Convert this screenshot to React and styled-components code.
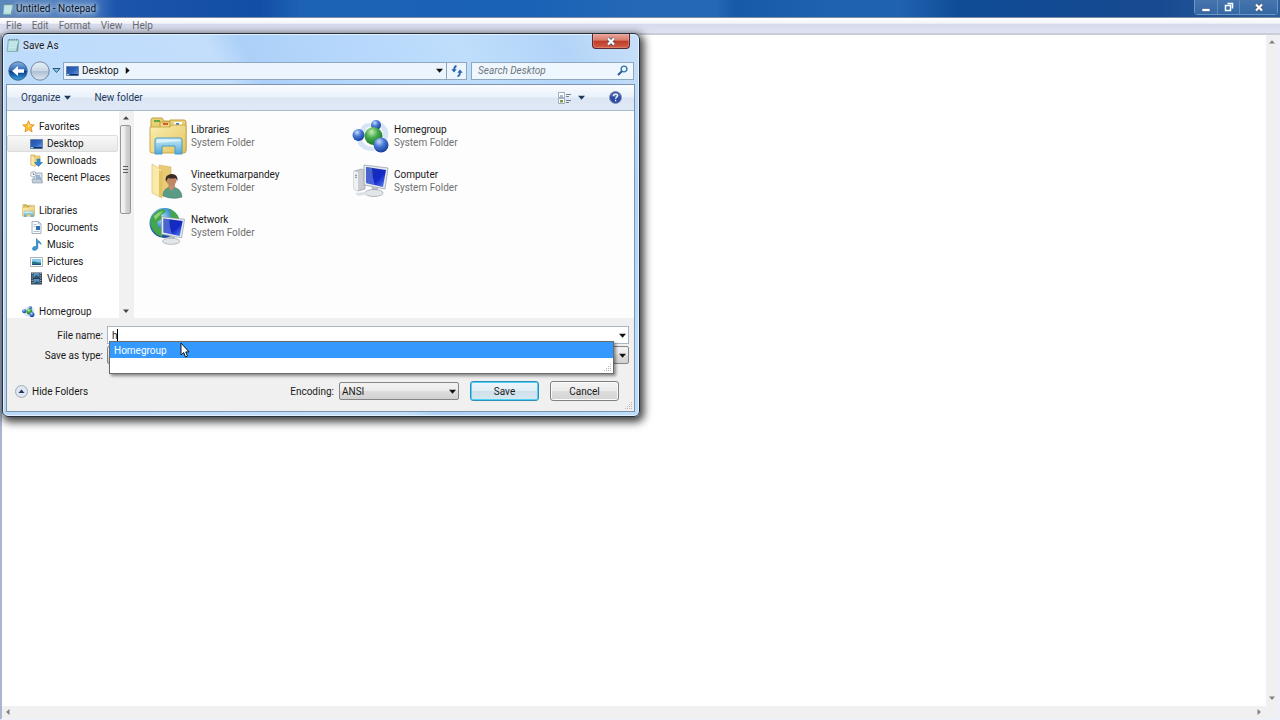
import React, { useState } from 'react';
import styled, { createGlobalStyle } from 'styled-components';

const GlobalStyle = createGlobalStyle`
  * {
    box-sizing: border-box;
  }

  body {
    margin: 0;
    font-family: Roboto, "Open Sans", sans-serif;
    font-size: 10px;
    line-height: 13px;
    color: #1a1a1a;
  }

  button, input, select, textarea {
    font: inherit;
    color: inherit;
    margin: 0;
    border-radius: 0;
  }

  svg {
    display: block;
    flex: none;
  }
`;

const Window = styled.main`
  position: relative;
  display: flex;
  flex-direction: column;
  height: 100vh;
  overflow: hidden;
  background: #ffffff;
`;

const TitleBar = styled.header`
  display: flex;
  align-items: center;
  height: 17px;
  padding-left: 2px;
  background: linear-gradient(90deg, #5c87bd 0, #4a7dc0 90px, #1c55ab 115px, #124ea5 260px, #1d62b5 300px, #1a62b6 530px, #2469b6 640px, #2469b6 715px, #165aa8 735px, #1f62b0 830px, #1f62b0 900px, #0f4b96 960px, #174a90 1160px, #2d609d 100%);
`;

const WindowTitle = styled.h1`
  margin: 0;
  padding: 0 2px;
  flex: 1;
  font-size: 10px;
  font-weight: 400;
  color: #0b1626;
  text-shadow: 0 0 4px #ffffffbb, 0 0 7px #ffffffaa, 0 0 9px #ffffff88;
`;

const WindowButtons = styled.div`
  display: flex;
  align-self: stretch;
  height: 15px;
  margin-right: 2px;
  border: 1px solid #7095c2;
  border-top: 0;
  border-radius: 0 0 4px 4px;
`;

const WindowButton = styled.button`
  display: flex;
  align-items: center;
  justify-content: center;
  width: ${(p) => (p.$wide ? '38px' : '22px')};
  padding: 0;
  border: 0;
  border-left: ${(p) => (p.$first ? '0' : '1px solid #6288b7')};
  background: linear-gradient(#4775ad, #3468a5);
`;

const MenuBar = styled.nav`
  display: flex;
  align-items: center;
  gap: 10px;
  height: 18px;
  padding: 0 6px;
  border-top: 1px solid #7d8ba3;
  border-bottom: 2px solid #cbccd8;
  background: linear-gradient(#ffffff 0, #f3f4fa 35%, #d6dcee 42%, #dfe3f3 100%);
`;

const MenuItem = styled.button`
  padding: 0;
  border: 0;
  background: none;
  color: #6d6d70;
`;

const Editor = styled.div`
  flex: 1;
  display: grid;
  grid-template-columns: 1fr 12px;
  grid-template-rows: 1fr 12px;
  border-left: 2px solid #a8b6cf;
  border-right: 2px solid #eef1fa;
  border-bottom: 2px solid #eef1fa;
  min-height: 0;
`;

const TextArea = styled.textarea`
  padding: 4px;
  border: 0;
  outline: 0;
  resize: none;
  background: #ffffff;
`;

const ScrollTrack = styled.div`
  display: flex;
  flex-direction: ${(p) => (p.$horizontal ? 'row' : 'column')};
  align-items: center;
  justify-content: space-between;
  padding: ${(p) => (p.$horizontal ? '0 4px 0 3px' : '4px 0 5px')};
  background: #f0f0f1;
`;

const Corner = styled.div`
  background: #f0f0f1;
`;

const Dialog = styled.section`
  position: absolute;
  left: 2px;
  top: 33px;
  width: 638px;
  max-width: 100%;
  padding: 0 4px 4px 3px;
  border: 1px solid #24303e;
  border-radius: 6px;
  background: linear-gradient(62deg, #b9d7f7 0, #bedcfc 30%, #c3defb 48%, #acd0f8 52%, #b4d6fb 62%, #bfdefc 78%, #b2d4f8 90%, #c9e0f8 100%);
  box-shadow: inset 0 0 0 1px #e3f1fd, 2px 3px 9px 2px #000000c0;
`;

const DialogTitle = styled.div`
  display: flex;
  align-items: flex-start;
  justify-content: space-between;
  height: 25px;
  padding-right: 5px;
`;

const DialogName = styled.h2`
  display: flex;
  align-items: center;
  gap: 3px;
  margin: 4px 0 0;
  font-size: 10px;
  font-weight: 400;
  text-shadow: 0 0 6px #ffffff;
`;

const CloseButton = styled.button`
  display: flex;
  align-items: center;
  justify-content: center;
  width: 38px;
  height: 15px;
  padding: 0;
  border: 1px solid #5a2a30;
  border-top: 0;
  border-radius: 0 0 4px 4px;
  background: linear-gradient(#e9a79c 0, #d77a6b 45%, #bf3a26 50%, #d0604a 100%);
  box-shadow: inset 0 0 0 1px #f0b6a955;
`;

const AddressRow = styled.div`
  display: flex;
  align-items: center;
  height: 23px;
  margin-bottom: 2px;
  padding-right: 1px;
`;

const PlainButton = styled.button`
  display: flex;
  align-items: center;
  gap: 4px;
  padding: 0;
  border: 0;
  background: none;
`;

const NavButtons = styled.div`
  display: flex;
  align-items: center;
  gap: 2px;
  padding: 0 2px;
`;

const AddressBar = styled.div`
  flex: 1;
  display: flex;
  align-items: center;
  gap: 3px;
  height: 18px;
  padding-left: 2px;
  border: 1px solid #8fa6bf;
  background: #ecf5fe;
`;

const CrumbArrow = styled(PlainButton)`
  margin: 0 auto 0 2px;
`;

const RefreshButton = styled(PlainButton)`
  justify-content: center;
  width: 20px;
  height: 16px;
  border-left: 1px solid #8fa6bf;
`;

const SearchBox = styled.label`
  display: flex;
  align-items: center;
  width: 163px;
  height: 18px;
  margin-left: 4px;
  padding: 0 5px 0 6px;
  border: 1px solid #8fa6bf;
  background: #eef6fe;

  input {
    flex: 1;
    min-width: 0;
    padding: 0;
    border: 0;
    outline: 0;
    background: none;
    font-style: italic;
  }

  input::placeholder {
    color: #6f7780;
    opacity: 1;
  }
`;

const DialogBody = styled.div`
  border: 1px solid #7c93ab;
  background: #f0f0f0;
`;

const Toolbar = styled.div`
  display: flex;
  align-items: center;
  height: 26px;
  padding: 0 12px 0 14px;
  border-bottom: 1px solid #aabccf;
  background: linear-gradient(#fafcfe 0, #eaf1fa 48%, #dce6f4 52%, #dfe9f6 100%);
  color: #1e395b;
`;

const ToolButton = styled(PlainButton)`
  margin-right: 23px;
`;

const ToolIcons = styled.div`
  display: flex;
  align-items: center;
  gap: 24px;
  margin-left: auto;

  button {
    gap: 7px;
  }
`;

const Explorer = styled.div`
  display: flex;
  height: 207px;
`;

const Sidebar = styled.nav`
  width: 112px;
  padding: 7px 0 0;
  overflow: hidden;
  background: #ffffff;
`;

const TreeList = styled.ul`
  margin: 0 0 16px;
  padding: 0;
  list-style: none;
`;

const TreeItem = styled.li`
  height: 17px;
`;

const TreeButton = styled.button`
  display: flex;
  align-items: center;
  gap: 4px;
  width: 111px;
  height: 17px;
  padding: 0 0 0 ${(p) => (p.$child ? '22px' : '14px')};
  border: 1px solid ${(p) => (p.$selected ? '#dcdcdc' : 'transparent')};
  border-radius: 2px;
  background: ${(p) => (p.$selected ? 'linear-gradient(#f9f9f9, #e8e8e8)' : 'none')};
  white-space: nowrap;
`;

const SideScroll = styled.div`
  display: flex;
  flex-direction: column;
  align-items: center;
  width: 13px;
  padding: 4px 0;
  background: #f1f1f1;
`;

const Thumb = styled.div`
  display: flex;
  align-items: center;
  justify-content: center;
  width: 11px;
  height: 89px;
  margin: 4px 0 auto;
  border: 1px solid #979797;
  border-radius: 2px;
  background: linear-gradient(90deg, #f6f6f6 0, #e8e8e9 45%, #d3d3d6 55%, #c6c6ca 100%);
`;

const FileArea = styled.div`
  flex: 1;
  margin-left: 2px;
  padding: 2px 0 0 15px;
  background: #fdfdfd;
`;

const FileGrid = styled.div`
  display: grid;
  grid-template-columns: 203px 203px;
  grid-auto-rows: 45px;
`;

const Tile = styled.button`
  display: flex;
  align-items: center;
  gap: 4px;
  padding: 0;
  border: 0;
  background: none;
  text-align: left;
`;

const TileName = styled.span`
  display: block;
`;

const TileType = styled.span`
  display: block;
  color: #707070;
`;

const Form = styled.form`
  padding: 8px 5px 10px 0;
`;

const Field = styled.div`
  display: grid;
  grid-template-columns: 96px 1fr;
  align-items: center;
  column-gap: 4px;
  margin-bottom: 2px;

  > label {
    text-align: right;
  }
`;

const Combo = styled.div`
  position: relative;
  display: flex;
  height: 18px;
  border: 1px solid #a8b6c4;
  background: #ffffff;

  input {
    flex: 1;
    min-width: 0;
    padding: 0 4px;
    border: 0;
    outline: 0;
    background: none;
    caret-color: transparent;
  }
`;

const ComboButton = styled(PlainButton)`
  justify-content: center;
  width: 12px;
`;

const Caret = styled.span`
  position: absolute;
  left: 9px;
  top: 2px;
  width: 1px;
  height: 12px;
  background: #000000;
`;

const Suggestions = styled.ul`
  position: absolute;
  z-index: 1;
  left: 1px;
  right: 14px;
  top: 14px;
  height: 33px;
  margin: 0;
  padding: 0;
  list-style: none;
  border: 1px solid #6b6b6b;
  background: #ffffff;
  box-shadow: 2px 2px 3px #00000070;
`;

const Suggestion = styled.li`
  height: 16px;
  padding: 2px 4px 1px;
  background: #3399ff;
  color: #ffffff;
`;

const PopupGrip = styled.span`
  position: absolute;
  right: 1px;
  bottom: 1px;
`;

const SelectBox = styled.div`
  position: relative;
  display: flex;
  align-items: center;
  width: ${(p) => p.$width};

  select {
    width: 100%;
    height: 18px;
    padding: 0 2px;
    appearance: none;
    border: 1px solid #858585;
    border-radius: 2px;
    background: linear-gradient(#f3f3f3 0, #ebebeb 48%, #dddddd 52%, #d1d1d1 100%);
  }

  svg {
    position: absolute;
    right: 3px;
    pointer-events: none;
  }
`;

const Footer = styled.div`
  display: flex;
  align-items: center;
  padding: 15px 10px 0 8px;
`;

const EncodingField = styled.div`
  display: flex;
  align-items: center;
  gap: 5px;
  margin-left: auto;
`;

const PushButton = styled.button`
  width: 69px;
  height: 20px;
  margin-left: 11px;
  padding: 0;
  border: 1px solid ${(p) => (p.$primary ? '#2f8fb8' : '#808080')};
  border-radius: 3px;
  background: ${(p) => (p.$primary
    ? 'linear-gradient(#eef5f9 0, #e2eef5 48%, #cfe0ea 52%, #d6e8f2 100%)'
    : 'linear-gradient(#f3f3f3 0, #ebebeb 48%, #dddddd 52%, #d3d3d3 100%)')};
  box-shadow: inset 0 0 0 1px ${(p) => (p.$primary ? '#4fd0f5' : '#fbfbfb')};
`;

const DialogGrip = styled.span`
  position: absolute;
  right: 6px;
  bottom: 6px;
`;

const Pointer = styled.span`
  position: absolute;
  z-index: 2;
  left: 180px;
  top: 342px;
`;

const Arrow = ({ color = '#111111', size = 7, turn = 0 }) => (
  <svg width={size} height={size} viewBox="0 0 8 8" transform={`rotate(${turn})`}>
    <path d="M0 2h8L4 6.5z" fill={color} />
  </svg>
);

const Grip = () => (
  <svg width="9" height="9" viewBox="0 0 9 9" fill="#b9b9b9">
    <path d="M7 1h1v1H7zM5 3h1v1H5zM7 3h1v1H7zM3 5h1v1H3zM5 5h1v1H5zM7 5h1v1H7zM1 7h1v1H1zM3 7h1v1H3zM5 7h1v1H5zM7 7h1v1H7z" />
  </svg>
);

const CrossIcon = () => (
  <svg width="10" height="9" viewBox="0 0 10 9">
    <path d="M2 1.5 8 7.5M8 1.5 2 7.5" stroke="#4a5365" strokeWidth="3.6" />
    <path d="M2 1.5 8 7.5M8 1.5 2 7.5" stroke="#ffffff" strokeWidth="2.2" />
  </svg>
);

const NotepadIcon = ({ size = 12 }) => (
  <svg width={size} height={size} viewBox="0 0 12 12">
    <path d="M2 1.5h9l-1 10H1z" fill="#b7dfe2" stroke="#6b9a9f" strokeWidth=".6" />
    <path d="M3 4h6.5M2.8 6h6.5M2.6 8h6.4" stroke="#d4f0f0" strokeWidth=".7" />
    <path d="m10.8 2-.9 9.4-1.1-1z" fill="#6d8c8f" />
    <path d="M3 .8v1.4M5 .8v1.4M7 .8v1.4M9 .8v1.4" stroke="#657a80" strokeWidth=".7" />
  </svg>
);

const BackIcon = () => (
  <svg width="20" height="20" viewBox="0 0 20 20">
    <defs>
      <linearGradient id="back" x2="0" y2="1">
        <stop stopColor="#8ab4e3" />
        <stop offset=".48" stopColor="#2b63b1" />
        <stop offset=".52" stopColor="#0b398c" />
        <stop offset="1" stopColor="#34a8e8" />
      </linearGradient>
    </defs>
    <circle cx="10" cy="10" r="9.2" fill="url(#back)" stroke="#435f85" />
    <path d="m4 10 6-5v3.3h6v3.4h-6V15z" fill="#ffffff" />
  </svg>
);

const ForwardIcon = () => (
  <svg width="20" height="20" viewBox="0 0 20 20">
    <defs>
      <linearGradient id="fwd" x2="0" y2="1">
        <stop stopColor="#e9f1f8" />
        <stop offset=".5" stopColor="#c9d6e3" />
        <stop offset=".53" stopColor="#adc0d2" />
        <stop offset="1" stopColor="#dce9f5" />
      </linearGradient>
    </defs>
    <circle cx="10" cy="10" r="9.2" fill="url(#fwd)" stroke="#74869b" />
  </svg>
);

const DesktopIcon = () => (
  <svg width="13" height="12" viewBox="0 0 13 12">
    <defs>
      <linearGradient id="desk" x2="1" y2="1">
        <stop stopColor="#2450a4" />
        <stop offset=".5" stopColor="#2f62bd" />
        <stop offset="1" stopColor="#6ba2e8" />
      </linearGradient>
    </defs>
    <path d="M.5 1.5h12v9H.5z" fill="url(#desk)" stroke="#5d7ba6" strokeWidth=".8" />
    <path d="M1 9h11v1.4H1z" fill="#16305f" />
    <path d="M1 9h2.4v1.4H1z" fill="#8fd6e8" />
  </svg>
);

const RefreshIcon = () => (
  <svg width="12" height="12" viewBox="0 0 12 12" fill="none" stroke="#2c63b4" strokeWidth="1.8">
    <path d="M5.5 1C3 1.5 3 3.5 3 6" />
    <path d="M.3 4.2 3 7.4l2.7-3.2z" fill="#2c63b4" stroke="none" />
    <path d="M6.5 11.2C9 10.7 9 8.7 9 6.7" />
    <path d="M6.3 7.8 9 4.6l2.7 3.2z" fill="#2c63b4" stroke="none" />
  </svg>
);

const SearchIcon = () => (
  <svg width="11" height="11" viewBox="0 0 11 11">
    <circle cx="7" cy="4" r="2.9" fill="#eaf6ff" stroke="#3175ae" strokeWidth="1.4" />
    <path d="M4.9 6.2 1 10" stroke="#285a94" strokeWidth="1.9" />
  </svg>
);

const ViewIcon = () => (
  <svg width="13" height="12" viewBox="0 0 13 12">
    <path d="M.5.5h6v5h-6zM.5 6.5h6v5h-6z" fill="#ffffff" stroke="#8e9aa8" strokeWidth=".8" />
    <path d="M1.5 4.5 3 3l1 1 1-1v1.5z" fill="#3c78a8" />
    <path d="M2 8h3v2.5H2z" fill="#7a9a42" />
    <path d="M8 2.5h5M8 4.5h3M8 8.5h5M8 10.5h3" stroke="#74808f" />
  </svg>
);

const HelpIcon = () => (
  <svg width="13" height="13" viewBox="0 0 13 13">
    <circle cx="6.5" cy="6.5" r="6" fill="#2c4ba6" stroke="#8896b4" />
    <path d="M2 5a4.7 4.7 0 0 1 9 0c-3 1.5-6 1.5-9 0z" fill="#7b93d6" opacity=".6" />
    <path d="M4.6 5c0-2.6 4-2.5 3.9-.2 0 1.4-1.9 1.4-1.9 3M6.6 8.8v1.4" fill="none" stroke="#ffffff" strokeWidth="1.3" />
  </svg>
);

const StarIcon = () => (
  <svg width="13" height="13" viewBox="0 0 13 13">
    <path d="m6.5.8 1.6 3.9 4.2.3-3.2 2.7 1 4.2-3.6-2.3-3.6 2.3 1-4.2L.7 5l4.2-.3z" fill="#ffc233" stroke="#e0851c" strokeWidth=".8" />
    <path d="m6.5 2.5 1 3H10L6 7z" fill="#ffe58a" />
  </svg>
);

const DownloadsIcon = () => (
  <svg width="13" height="13" viewBox="0 0 13 13">
    <path d="M1 1h4l1 1h4v9H1z" fill="#f2d57c" stroke="#c9a349" strokeWidth=".6" />
    <path d="m1 1 4 2v9.5L1 11z" fill="#fbe9a8" stroke="#c9a349" strokeWidth=".5" />
    <path d="M7 5h3v3.5h2.5l-4 4-4-4H7z" fill="#2f8fd4" stroke="#1c6ba8" strokeWidth=".5" />
  </svg>
);

const RecentIcon = () => (
  <svg width="13" height="13" viewBox="0 0 13 13">
    <path d="M4 2h8v9H4z" fill="#dfe7ef" stroke="#8595a8" strokeWidth=".7" />
    <path d="M6 5h4M6 7h5" stroke="#4d85ba" />
    <path d="M2 8h9l1.5 4h-10z" fill="#c3ceda" stroke="#8595a8" strokeWidth=".6" />
    <circle cx="3.3" cy="3.3" r="2.7" fill="#f7fafc" stroke="#91a0b0" strokeWidth=".8" />
    <path d="M3.3 1.7v1.8h1.3" fill="none" stroke="#4c5f78" strokeWidth=".7" />
  </svg>
);

const LibraryIcon = ({ size = 13 }) => (
  <svg width={size} height={size} viewBox="0 0 38 38">
    <defs>
      <linearGradient id="folder" x2="1" y2="1">
        <stop stopColor="#fbf0b4" />
        <stop offset="1" stopColor="#e5c25c" />
      </linearGradient>
      <linearGradient id="stand" x2="0" y2="1">
        <stop stopColor="#c8ecf9" />
        <stop offset="1" stopColor="#52a9d8" />
      </linearGradient>
    </defs>
    <path d="M2 3q0-2 2-2h9l2 3h8v30H2z" fill="#e9d070" stroke="#bf9f45" />
    <path d="M11 5h10l2 3h9v26H11z" fill="#efd97f" stroke="#bf9f45" />
    <path d="M21 3h14q2 0 2 2v29H21z" fill="#ead079" stroke="#bf9f45" />
    <path d="M5 3h6v2H5z" fill="#65a745" />
    <path d="M14 6h5v2h-5z" fill="#d4583a" />
    <path d="M25 5h8v3h-8z" fill="#ffffff" />
    <path d="M27 6h3v2h-3z" fill="#3a80c4" />
    <path d="M1 10h20l2-2h14v26q0 2-2 2H3q-2 0-2-2z" fill="url(#folder)" stroke="#c9a94f" />
    <path d="M6 23q0-2 2-2h23q2 0 2 2v14h-7v-8H13v8H6z" fill="url(#stand)" stroke="#4b9cc8" />
    <path d="M7.5 24q0-1.5 1.5-1.5h21q1.5 0 1.5 1.5l-24 2z" fill="#ecfaff" opacity=".7" />
  </svg>
);

const DocumentIcon = () => (
  <svg width="13" height="13" viewBox="0 0 13 13">
    <path d="M2 .5h6.5L11 3v9.5H2z" fill="#f8fbfd" stroke="#8fa0b2" strokeWidth=".8" />
    <path d="M8.500.5V3H11M3.5 3.5h3M3.5 5.5h2M3.5 10.5h6" fill="none" stroke="#91a9c1" strokeWidth=".7" />
    <path d="M6 5h4v4H6z" fill="#336fb0" />
  </svg>
);

const MusicIcon = () => (
  <svg width="13" height="13" viewBox="0 0 13 13">
    <path d="M6.5.5c.5 2.5 4.5 2.5 4.5 6-1-1.5-2-2-3.2-2v5c0 3-5.3 4-5.3 1.2 0-1.7 2.2-2.7 4-2z" fill="#3898da" stroke="#1767a8" strokeWidth=".6" />
  </svg>
);

const PictureIcon = () => (
  <svg width="13" height="12" viewBox="0 0 13 12">
    <path d="M.5 1.5h12v9H.5z" fill="#ffffff" stroke="#94a2b0" strokeWidth=".8" />
    <path d="M2 3h9v6H2z" fill="#86c9ee" />
    <path d="M2 6c3-1.5 5 1 9 .5V9H2z" fill="#27768b" />
    <path d="M2 8h9v1H2z" fill="#1d4f86" />
  </svg>
);

const VideoIcon = () => (
  <svg width="13" height="13" viewBox="0 0 13 13">
    <path d="M1 .5h11v12H1z" fill="#2e3c4d" />
    <path d="M3.5 1h6v5h-6zM3.5 7h6v5h-6z" fill="#5793bd" />
    <path d="m3.5 6 3-3 3 2v1zM3.5 12l3-3 3 2v1z" fill="#27566f" />
    <path d="M2.2 1v11.5M10.8 1v11.5" stroke="#d6e0e8" strokeDasharray="1 1.3" />
  </svg>
);

const HomegroupIcon = ({ size = 13 }) => (
  <svg width={size} height={size} viewBox="0 0 38 38">
    <defs>
      <radialGradient id="ballBlue" cx=".38" cy=".28" r=".75">
        <stop stopColor="#c9dcfb" />
        <stop offset=".45" stopColor="#4778d4" />
        <stop offset="1" stopColor="#153a9a" />
      </radialGradient>
      <radialGradient id="ballGreen" cx=".4" cy=".28" r=".75">
        <stop stopColor="#c5f0b7" />
        <stop offset=".45" stopColor="#45a94a" />
        <stop offset="1" stopColor="#177127" />
      </radialGradient>
    </defs>
    <path d="M4 21q3 14 19 13l-3-4Q11 29 9 20zM18 6Q9 6 8 14l5 1q2-6 6-5zM30 6q9 6 5 17l-4-3q1-6-4-11z" fill="#d5e5f6" />
    <circle cx="24" cy="8" r="5" fill="url(#ballBlue)" />
    <circle cx="6.5" cy="18" r="6" fill="url(#ballBlue)" />
    <circle cx="21.5" cy="19" r="9" fill="url(#ballGreen)" />
    <circle cx="29" cy="28" r="7.5" fill="url(#ballBlue)" />
  </svg>
);

const UserIcon = () => (
  <svg width="38" height="38" viewBox="0 0 38 38">
    <path d="m10 3 12 2v27l-10 2z" fill="#e8cb74" stroke="#d1ad51" strokeWidth=".5" />
    <path d="m3 2 10 6v28L3 31z" fill="#fbe9a9" stroke="#d9bc66" strokeWidth=".6" />
    <path d="m10 8 3 1.500V36l-3-1.500z" fill="#e3c263" />
    <path d="M14 34q0-8 8-9 10 0 11 10-9 3-19-1z" fill="#5a9c86" stroke="#3c7966" strokeWidth=".6" />
    <path d="m19 25 3 4 4-4v-4h-6z" fill="#c58d6c" />
    <circle cx="22.5" cy="18.5" r="5" fill="#c08765" />
    <path d="M17 20q-2-7 5-8 7-.5 6.500 7l-2-3q-4 1-7.500 0z" fill="#3a2a24" />
  </svg>
);

const Monitor = () => (
  <>
    <path d="m12 3 24 3-3 21-21-4z" fill="#e7eaee" stroke="#8e969f" strokeWidth=".7" />
    <path d="m14 5 20 3-3 17-17-4z" fill="url(#screen)" />
    <path d="m14 5 6 .9q0 9 3 17l-9-2z" fill="#8aa7f3" opacity=".45" />
    <path d="m20 25 6 1v4h-7z" fill="#b6bcc3" />
    <ellipse cx="22" cy="31" rx="9" ry="3.5" fill="#e3e6e9" stroke="#9aa1a9" strokeWidth=".7" />
  </>
);

const ScreenGradient = () => (
  <defs>
    <linearGradient id="screen" x2="1" y2="1">
      <stop stopColor="#1532a5" />
      <stop offset=".6" stopColor="#1328c8" />
      <stop offset="1" stopColor="#5c8df0" />
    </linearGradient>
  </defs>
);

const ComputerIcon = () => (
  <svg width="38" height="38" viewBox="0 0 38 38">
    <ScreenGradient />
    <path d="m2 9 8-2 3 2v18L6 29l-4-2z" fill="#c8cdd2" stroke="#8a9097" strokeWidth=".6" />
    <path d="m2 9 4 1.500V29l-4-2z" fill="#eff1f3" />
    <path d="M3 13l2 .5M3 15l2 .5" stroke="#7b838b" />
    <Monitor />
    <path d="m3 31 10-1 4 2-11 2z" fill="#dde1e5" />
  </svg>
);

const NetworkIcon = () => (
  <svg width="38" height="38" viewBox="0 0 38 38">
    <defs>
      <radialGradient id="globe" cx=".38" cy=".3" r=".75">
        <stop stopColor="#b8e5fb" />
        <stop offset=".45" stopColor="#3a8fd3" />
        <stop offset="1" stopColor="#123e8a" />
      </radialGradient>
    </defs>
    <circle cx="15.5" cy="16" r="15" fill="url(#globe)" />
    <path d="M4 8q5-6 11-6l2 3-5 3 1 4-5 3 1 5 5 3-1 7q-6-2-9-7Q-1 15 4 8zM20 2q7 2 10 9l-4 2-5-4 1-3z" fill="#43a648" />
    <path d="M5 9q4-4 9-5l-4 5-4 4z" fill="#a7df83" opacity=".8" />
    <g transform="translate(1 7) scale(.96 .88)">
      <Monitor />
    </g>
  </svg>
);

const Tree = [
  [
    { name: 'Favorites', icon: <StarIcon /> },
    { name: 'Desktop', icon: <DesktopIcon />, child: true, selected: true },
    { name: 'Downloads', icon: <DownloadsIcon />, child: true },
    { name: 'Recent Places', icon: <RecentIcon />, child: true },
  ],
  [
    { name: 'Libraries', icon: <LibraryIcon /> },
    { name: 'Documents', icon: <DocumentIcon />, child: true },
    { name: 'Music', icon: <MusicIcon />, child: true },
    { name: 'Pictures', icon: <PictureIcon />, child: true },
    { name: 'Videos', icon: <VideoIcon />, child: true },
  ],
  [{ name: 'Homegroup', icon: <HomegroupIcon /> }],
];

const Files = [
  { name: 'Libraries', icon: <LibraryIcon size={38} /> },
  { name: 'Homegroup', icon: <HomegroupIcon size={38} /> },
  { name: 'Vineetkumarpandey', icon: <UserIcon /> },
  { name: 'Computer', icon: <ComputerIcon /> },
  { name: 'Network', icon: <NetworkIcon /> },
];

const SaveDialog = () => {
  const [fileName, setFileName] = useState('h');

  return (
    <Dialog role="dialog" aria-labelledby="dialog-name">
      <DialogTitle>
        <DialogName id="dialog-name"><NotepadIcon size={14} />Save As</DialogName>
        <CloseButton aria-label="Close dialog"><CrossIcon /></CloseButton>
      </DialogTitle>
      <AddressRow>
        <NavButtons>
          <PlainButton aria-label="Back"><BackIcon /></PlainButton>
          <PlainButton aria-label="Forward"><ForwardIcon /></PlainButton>
          <PlainButton aria-label="Recent pages">
            <svg width="9" height="7" viewBox="0 0 9 7">
              <path d="M1 1.5h7L4.5 5.5z" fill="#7fc8de" stroke="#27587f" />
            </svg>
          </PlainButton>
        </NavButtons>
        <AddressBar>
          <DesktopIcon />
          <PlainButton>Desktop</PlainButton>
          <CrumbArrow aria-label="Show subfolders"><Arrow turn={-90} /></CrumbArrow>
          <PlainButton aria-label="Previous locations"><Arrow /></PlainButton>
          <RefreshButton aria-label="Refresh"><RefreshIcon /></RefreshButton>
        </AddressBar>
        <SearchBox>
          <input type="text" placeholder="Search Desktop" aria-label="Search Desktop" />
          <SearchIcon />
        </SearchBox>
      </AddressRow>
      <DialogBody>
        <Toolbar>
          <ToolButton>Organize <Arrow color="#1e395b" /></ToolButton>
          <ToolButton>New folder</ToolButton>
          <ToolIcons>
            <PlainButton aria-label="Change view"><ViewIcon /><Arrow color="#1e395b" /></PlainButton>
            <PlainButton aria-label="Help"><HelpIcon /></PlainButton>
          </ToolIcons>
        </Toolbar>
        <Explorer>
          <Sidebar>
            {Tree.map((group) => (
              <TreeList key={group[0].name}>
                {group.map((item) => (
                  <TreeItem key={item.name}>
                    <TreeButton $child={item.child} $selected={item.selected}>
                      {item.icon}
                      {item.name}
                    </TreeButton>
                  </TreeItem>
                ))}
              </TreeList>
            ))}
          </Sidebar>
          <SideScroll>
            <Arrow color="#444444" size={6} turn={180} />
            <Thumb>
              <svg width="5" height="7" viewBox="0 0 5 7">
                <path d="M0 .5h5M0 3.5h5M0 6.5h5" stroke="#5c5c5c" />
              </svg>
            </Thumb>
            <Arrow color="#444444" size={6} />
          </SideScroll>
          <FileArea>
            <FileGrid>
              {Files.map((file) => (
                <Tile key={file.name}>
                  {file.icon}
                  <span>
                    <TileName>{file.name}</TileName>
                    <TileType>System Folder</TileType>
                  </span>
                </Tile>
              ))}
            </FileGrid>
          </FileArea>
        </Explorer>
        <Form onSubmit={(e) => e.preventDefault()}>
          <Field>
            <label htmlFor="file-name">File name:</label>
            <Combo>
              <input
                id="file-name"
                type="text"
                autoComplete="off"
                value={fileName}
                onChange={(e) => setFileName(e.target.value)}
              />
              <Caret />
              <ComboButton type="button" aria-label="Show file names"><Arrow /></ComboButton>
              <Suggestions role="listbox">
                <Suggestion role="option" aria-selected="true">Homegroup</Suggestion>
                <PopupGrip><Grip /></PopupGrip>
              </Suggestions>
            </Combo>
          </Field>
          <Field>
            <label htmlFor="file-type">Save as type:</label>
            <SelectBox $width="100%">
              <select id="file-type" />
              <Arrow />
            </SelectBox>
          </Field>
          <Footer>
            <PlainButton type="button">
              <svg width="13" height="13" viewBox="0 0 13 13">
                <circle cx="6.5" cy="6.5" r="6" fill="#dfe6ef" stroke="#9eacbd" />
                <path d="M3.5 8h6l-3-3.5z" fill="#1e3561" />
              </svg>
              Hide Folders
            </PlainButton>
            <EncodingField>
              <label htmlFor="encoding">Encoding:</label>
              <SelectBox $width="120px">
                <select id="encoding" defaultValue="ANSI">
                  <option>ANSI</option>
                  <option>Unicode</option>
                  <option>UTF-8</option>
                </select>
                <Arrow />
              </SelectBox>
            </EncodingField>
            <PushButton type="submit" $primary>Save</PushButton>
            <PushButton type="button">Cancel</PushButton>
          </Footer>
        </Form>
      </DialogBody>
      <DialogGrip><Grip /></DialogGrip>
    </Dialog>
  );
};

const App = () => (
  <>
    <GlobalStyle />
    <Window>
      <TitleBar>
        <NotepadIcon />
        <WindowTitle>Untitled - Notepad</WindowTitle>
        <WindowButtons>
          <WindowButton $first aria-label="Minimize">
            <svg width="10" height="9" viewBox="0 0 10 9">
              <path d="M1 5.5h8v3H1z" fill="#ffffff" stroke="#3b567c" strokeWidth=".6" />
            </svg>
          </WindowButton>
          <WindowButton aria-label="Restore">
            <svg width="10" height="10" viewBox="0 0 10 10">
              <path d="M3.5 1.5h5v5M1.5 3.5h5v5h-5z" fill="none" stroke="#ffffff" strokeWidth="1.5" />
            </svg>
          </WindowButton>
          <WindowButton $wide aria-label="Close"><CrossIcon /></WindowButton>
        </WindowButtons>
      </TitleBar>
      <MenuBar>
        {['File', 'Edit', 'Format', 'View', 'Help'].map((item) => (
          <MenuItem key={item}>{item}</MenuItem>
        ))}
      </MenuBar>
      <Editor>
        <TextArea aria-label="Document text" />
        <ScrollTrack>
          <Arrow color="#808080" size={6} turn={180} />
          <Arrow color="#808080" size={6} />
        </ScrollTrack>
        <ScrollTrack $horizontal>
          <Arrow color="#808080" size={6} turn={90} />
          <Arrow color="#808080" size={6} turn={-90} />
        </ScrollTrack>
        <Corner />
      </Editor>
      <SaveDialog />
      <Pointer>
        <svg width="10" height="16" viewBox="0 0 10 16">
          <path d="M1 1v12l2.7-2.5L5.5 15l2-.9-1.8-4.200H9z" fill="#ffffff" stroke="#000000" strokeWidth=".9" />
        </svg>
      </Pointer>
    </Window>
  </>
);

export default App;
